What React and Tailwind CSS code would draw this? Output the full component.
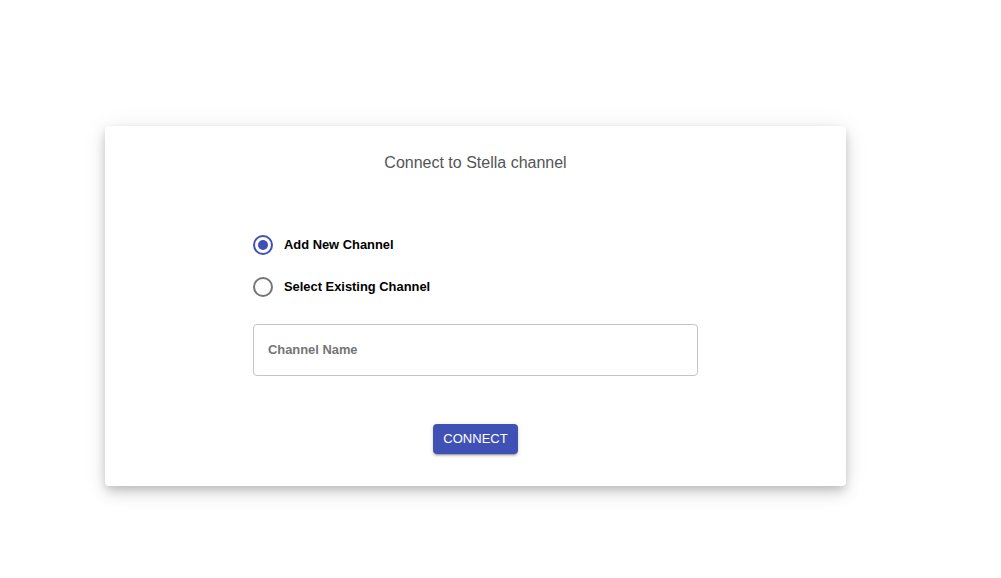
import React, { useState } from 'react';

const Radio = ({ checked, label, onClick }) => (
    <button type="button" onClick={onClick} className="flex items-center h-[20px] gap-[11px] text-left">
        <span
            className={
                'w-[20px] h-[20px] rounded-full border-2 flex items-center justify-center ' +
                (checked ? 'border-[#3f51b5]' : 'border-[#757575]')
            }
        >
            {checked && <span className="w-[10px] h-[10px] rounded-full bg-[#3f51b5]" />}
        </span>
        <span className="text-[12.9px] font-bold text-black">{label}</span>
    </button>
);

const App = () => {
    const [mode, setMode] = useState('new');

    return (
        <div className="min-h-screen bg-white pt-[126px] pl-[105px] font-['Liberation_Sans',Arial,sans-serif]">
            <div className="w-[741px] h-[360px] bg-white rounded-[4px] shadow-[0_4px_8px_-1px_rgba(0,0,0,0.16),0_8px_16px_0_rgba(0,0,0,0.1),0_2px_24px_0_rgba(0,0,0,0.08)] pt-[27px] flex flex-col items-center">
                <h2 className="text-[16px] leading-[20px] text-[#555555]">Connect to Stella channel</h2>
                <div className="w-[445px] mt-[62px] flex flex-col">
                    <div className="flex flex-col gap-[22px]">
                        <Radio checked={mode === 'new'} label="Add New Channel" onClick={() => setMode('new')} />
                        <Radio checked={mode === 'existing'} label="Select Existing Channel" onClick={() => setMode('existing')} />
                    </div>
                    <div className="mt-[27px] h-[52px] border border-[#c4c4c4] rounded-[4px] flex items-center px-[14px]">
                        <input
                            placeholder="Channel Name"
                            className="w-full outline-none text-[12.9px] font-bold text-black placeholder:text-[#757575]"
                        />
                    </div>
                </div>
                <button
                    type="button"
                    className="mt-[48px] w-[85px] h-[30px] rounded-[4px] bg-[#3f51b5] text-white text-[13px] shadow-[0_3px_1px_-2px_rgba(0,0,0,0.2),0_2px_2px_0_rgba(0,0,0,0.14),0_1px_5px_0_rgba(0,0,0,0.12)]"
                >
                    CONNECT
                </button>
            </div>
        </div>
    );
};

export default App;
